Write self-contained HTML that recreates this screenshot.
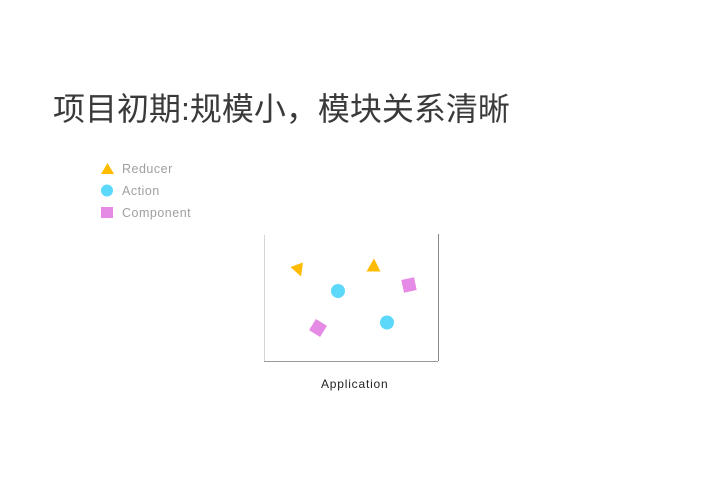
<!DOCTYPE html>
<html><head><meta charset="utf-8"><style>
body{margin:0;width:702px;height:496px;background:#fff;position:relative;overflow:hidden;font-family:"Liberation Sans","Noto Sans CJK SC",sans-serif}
.t{position:absolute;left:53px;top:89px;font-size:32px;color:#3a3a3a;white-space:nowrap;line-height:40px}
.l{position:absolute;left:122px;font-size:12.5px;color:#a0a0a0;line-height:14px;letter-spacing:0.5px}
.cap{position:absolute;left:321px;top:377px;font-size:12px;color:#222;letter-spacing:0.8px}
</style></head><body>
<div class="t">项目初期:规模小，模块关系清晰</div>
<svg width="702" height="496" style="position:absolute;left:0;top:0">
<polygon points="101,174 107.5,163 114,174" fill="#ffbb00"/>
<circle cx="107" cy="190.5" r="6" fill="#5cd8fb"/>
<rect x="101" y="207" width="12" height="11" fill="#e58ae5"/>
<line x1="264.5" y1="235" x2="264.5" y2="361" stroke="#d4d4d4"/>
<line x1="438.5" y1="234" x2="438.5" y2="361" stroke="#888"/>
<line x1="264" y1="361.5" x2="438" y2="361.5" stroke="#999"/>
<polygon points="290.5,267 303,262.5 301,276.5" fill="#ffbb00"/>
<polygon points="366.5,271.5 374,258.5 380.5,271.5" fill="#ffbb00"/>
<circle cx="338" cy="291" r="7" fill="#5cd8fb"/>
<circle cx="387" cy="322.5" r="7" fill="#5cd8fb"/>
<rect x="402.5" y="278.5" width="13" height="13" fill="#e58ae5" transform="rotate(-12 409 285)"/>
<rect x="311.5" y="321.5" width="13" height="13" fill="#e58ae5" transform="rotate(32 318 328)"/>
</svg>
<div class="l" style="top:162px">Reducer</div>
<div class="l" style="top:184px">Action</div>
<div class="l" style="top:206px">Component</div>
<div class="cap">Application</div>
</body></html>
